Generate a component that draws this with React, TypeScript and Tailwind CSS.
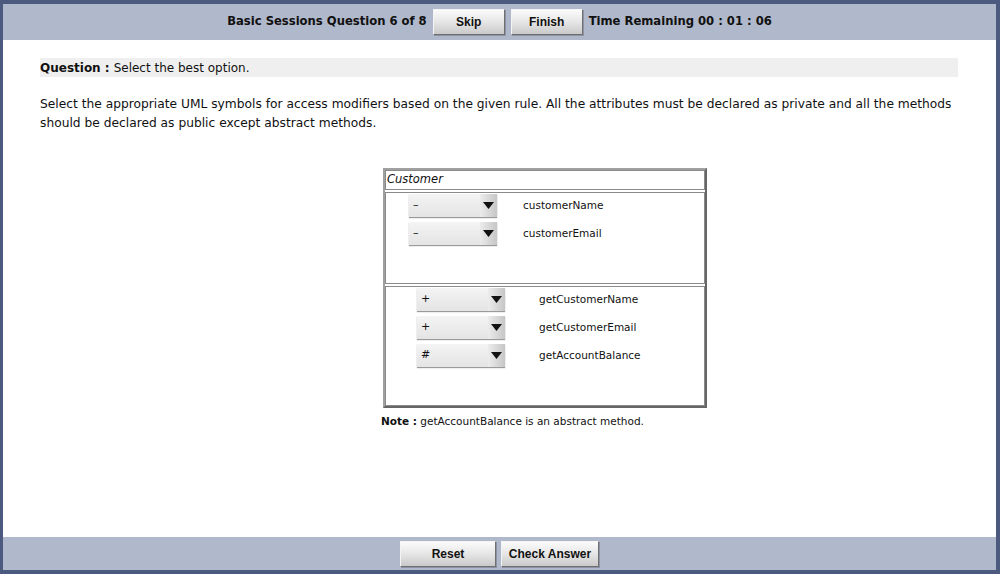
const font = { fontFamily: '"DejaVu Sans", Verdana, sans-serif' };

const Btn = ({ label, w }: { label: string; w: string }) => (
  <button
    className={`${w} h-[26px] border border-t-[#f4f4f4] border-l-[#f4f4f4] border-r-[#6f6f6f] border-b-[#6f6f6f] bg-gradient-to-b from-[#fbfbfb] via-[#e6e6e6] to-[#c9c9c9] text-[12px] font-bold text-[#111] shadow-[1px_1px_0_#8d93a3]`}
    style={{ fontFamily: '"Liberation Sans", Arial, sans-serif' }}
  >
    {label}
  </button>
);

const Select = ({ value }: { value: string }) => (
  <div className="flex h-[23px] w-[88px] shadow-[0_1px_1px_#9a9a9a]">
    <div className="flex flex-1 items-center bg-gradient-to-b from-[#f4f4f4] to-[#e4e4e4] pl-[4px] text-[11px] text-[#111]">
      {value}
    </div>
    <div className="flex w-[17px] items-center justify-center bg-gradient-to-r from-[#ececec] to-[#c6c6c6]">
      <svg width="11" height="7" viewBox="0 0 11 7">
        <polygon points="0,0 11,0 5.5,7" fill="#111" />
      </svg>
    </div>
  </div>
);

const Row = ({ value, name, indent, gap }: { value: string; name: string; indent: string; gap: string }) => (
  <div className={`flex items-start ${indent} h-[28px]`}>
    <Select value={value} />
    <span className={`${gap} pt-[4px] text-[10.5px] text-[#111]`}>{name}</span>
  </div>
);

export default function App() {
  return (
    <div className="flex h-[574px] w-[1000px] flex-col bg-[#4b5a7e] pb-[4px] pl-[3px] pr-[4px] pt-[4px]" style={font}>
      <div className="flex h-[36px] items-center justify-center gap-[6px] bg-[#b0b8cb] text-[11.6px] font-bold text-[#111]">
        <span>Basic Sessions Question 6 of 8</span>
        <Btn label="Skip" w="w-[72px]" />
        <Btn label="Finish" w="w-[72px]" />
        <span>Time Remaining 00 : 01 : 06</span>
      </div>
      <div className="flex flex-1 flex-col bg-white pl-[37px] pr-[38px] pt-[18px]">
        <div className="flex h-[19px] items-center bg-[#efefef] text-[12px] text-[#111]">
          <span className="font-bold">Question :</span>
          <span className="ml-[4px]">Select the best option.</span>
        </div>
        <p className="mt-[18px] text-[12.25px] leading-[19px] text-[#111]">
          Select the appropriate UML symbols for access modifiers based on the given rule. All the attributes must be declared as private and all the methods should be declared as public except abstract methods.
        </p>
        <div className="mt-[35px] flex flex-col items-start pl-[343px]">
          <div className="flex w-[324px] flex-col gap-[2px] border-2 border-t-[#a0a0a0] border-l-[#a0a0a0] border-r-[#666] border-b-[#666]">
            <div className="flex h-[20px] items-center border border-[#8a8a8a] pl-[1px] text-[11.5px] italic text-[#111]">
              Customer
            </div>
            <div className="flex h-[92px] flex-col border border-[#8a8a8a] pt-[1px]">
              <Row value="–" name="customerName" indent="pl-[23px]" gap="ml-[26px]" />
              <Row value="–" name="customerEmail" indent="pl-[23px]" gap="ml-[26px]" />
            </div>
            <div className="flex h-[120px] flex-col border border-[#8a8a8a] pt-[1px]">
              <Row value="+" name="getCustomerName" indent="pl-[31px]" gap="ml-[34px]" />
              <Row value="+" name="getCustomerEmail" indent="pl-[31px]" gap="ml-[34px]" />
              <Row value="#" name="getAccountBalance" indent="pl-[31px]" gap="ml-[34px]" />
            </div>
          </div>
          <div className="-ml-[2px] mt-[6px] text-[10.5px] text-[#111]">
            <span className="font-bold">Note :</span> getAccountBalance is an abstract method.
          </div>
        </div>
      </div>
      <div className="flex h-[33px] items-center justify-center gap-[5px] bg-[#b0b8cb]">
        <Btn label="Reset" w="w-[96px]" />
        <Btn label="Check Answer" w="w-[98px]" />
      </div>
    </div>
  );
}
